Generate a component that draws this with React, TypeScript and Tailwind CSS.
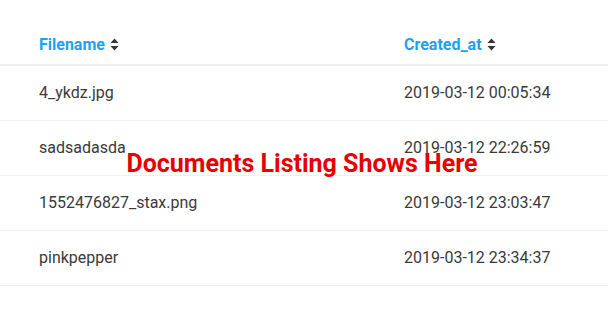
import React from 'react';

const docs = [
  { name: '4_ykdz.jpg', created: '2019-03-12 00:05:34' },
  { name: 'sadsadasda', created: '2019-03-12 22:26:59' },
  { name: '1552476827_stax.png', created: '2019-03-12 23:03:47' },
  { name: 'pinkpepper', created: '2019-03-12 23:34:37' },
];

function SortIcon() {
  return (
    <svg width="9" height="13" viewBox="0 0 9 13" className="inline-block ml-[5px] -mt-[2px]">
      <path d="M4.5 0.5 L8.5 5 H0.5 Z" fill="#363636" />
      <path d="M4.5 12.5 L8.5 8 H0.5 Z" fill="#363636" />
    </svg>
  );
}

export default function App() {
  return (
    <div className="relative w-[608px] h-[318px] bg-white" style={{ fontFamily: 'Roboto, sans-serif' }}>
      <table className="w-full border-collapse">
        <thead>
          <tr className="h-[65px] border-b-2 border-[#efefef]">
            <th className="pl-[39px] pt-[26px] text-left text-[16px] font-bold text-[#1da1f2] w-[404px]">
              Filename
              <SortIcon />
            </th>
            <th className="pt-[26px] text-left text-[16px] font-bold text-[#1da1f2]">
              Created_at
              <SortIcon />
            </th>
          </tr>
        </thead>
        <tbody>
          {docs.map((d) => (
            <tr key={d.name} className="h-[55px] border-b border-[#efefef] text-[16px] text-[#3a3a3a]">
              <td className="pl-[39px]">{d.name}</td>
              <td>{d.created}</td>
            </tr>
          ))}
        </tbody>
      </table>
      <div className="absolute left-0 right-0 top-[149px] pr-[4px] text-center text-[25px] font-bold text-[#e60000] leading-[30px]">
        Documents Listing Shows Here
      </div>
    </div>
  );
}
